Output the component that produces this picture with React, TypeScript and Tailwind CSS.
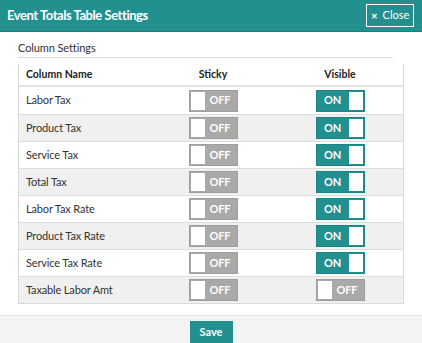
import React from "react";

const rows: { name: string; sticky: boolean; visible: boolean }[] = [
  { name: "Labor Tax", sticky: false, visible: true },
  { name: "Product Tax", sticky: false, visible: true },
  { name: "Service Tax", sticky: false, visible: true },
  { name: "Total Tax", sticky: false, visible: true },
  { name: "Labor Tax Rate", sticky: false, visible: true },
  { name: "Product Tax Rate", sticky: false, visible: true },
  { name: "Service Tax Rate", sticky: false, visible: true },
  { name: "Taxable Labor Amt", sticky: false, visible: false },
];

function Toggle({ on }: { on: boolean }) {
  if (on) {
    return (
      <div className="flex h-[22px] w-[49px] items-stretch border border-[#1c8487] bg-[#21908f] p-[1px]">
        <div className="flex flex-1 items-center justify-center pr-[1px] text-[11px] font-bold text-white">ON</div>
        <div className="w-[14px] bg-white" />
      </div>
    );
  }
  return (
    <div className="flex h-[22px] w-[49px] items-stretch border border-[#9e9e9e] bg-[#a9a9a9] p-[1px]">
      <div className="w-[14px] bg-white" />
      <div className="flex flex-1 items-center justify-center text-[11px] font-bold text-white">OFF</div>
    </div>
  );
}

export default function App() {
  return (
    <div
      className="flex h-[343px] w-[422px] flex-col overflow-hidden bg-white text-[#333]"
      style={{ fontFamily: "Lato, 'Open Sans', sans-serif" }}
    >
      <div className="flex h-[32px] shrink-0 items-center justify-between border-b border-[#1b7d80] bg-[#21908f] pl-[7px] pr-[8px]">
        <div className="text-[13px] font-bold tracking-[-0.45px] text-white">Event Totals Table Settings</div>
        <div className="flex h-[23px] w-[48px] items-center justify-center gap-[5px] border border-white text-[11px] text-white">
          <span className="text-[8px] font-bold">✕</span>
          <span>Close</span>
        </div>
      </div>
      <div className="flex-1 px-[18px] pt-[9px]">
        <div className="mr-[11px] border-b border-[#dedede] pb-[2px] text-[11px] leading-[14px] tracking-[-0.1px] text-[#333]">Column Settings</div>
        <div className="mt-[6px] border-x border-b border-[#dadada]">
          <div className="grid h-[23px] grid-cols-[130px_128px_1fr] items-center border-b-2 border-[#e2e2e2] text-[10.5px] font-bold text-[#222]">
            <div className="pl-[7px]">Column Name</div>
            <div className="text-center">Sticky</div>
            <div className="text-center">Visible</div>
          </div>
          {rows.map((r, i) => (
            <div
              key={r.name}
              className={`grid h-[27px] grid-cols-[130px_128px_1fr] items-center text-[11px] tracking-[-0.15px] text-[#333] ${i > 0 ? "border-t border-[#dedede]" : ""} ${i % 2 === 1 ? "bg-[#f0f0f0]" : "bg-white"}`}
            >
              <div className="pl-[7px]">{r.name}</div>
              <div className="flex justify-center">
                <Toggle on={r.sticky} />
              </div>
              <div className="flex justify-center">
                <Toggle on={r.visible} />
              </div>
            </div>
          ))}
        </div>
      </div>
      <div className="flex h-[28px] shrink-0 justify-center border-t border-[#e3e3e3] bg-[#f4f4f4] pt-[5px]">
        <div className="flex h-[22px] w-[43px] items-center justify-center bg-[#21908f] text-[11px] font-bold text-white">Save</div>
      </div>
    </div>
  );
}
